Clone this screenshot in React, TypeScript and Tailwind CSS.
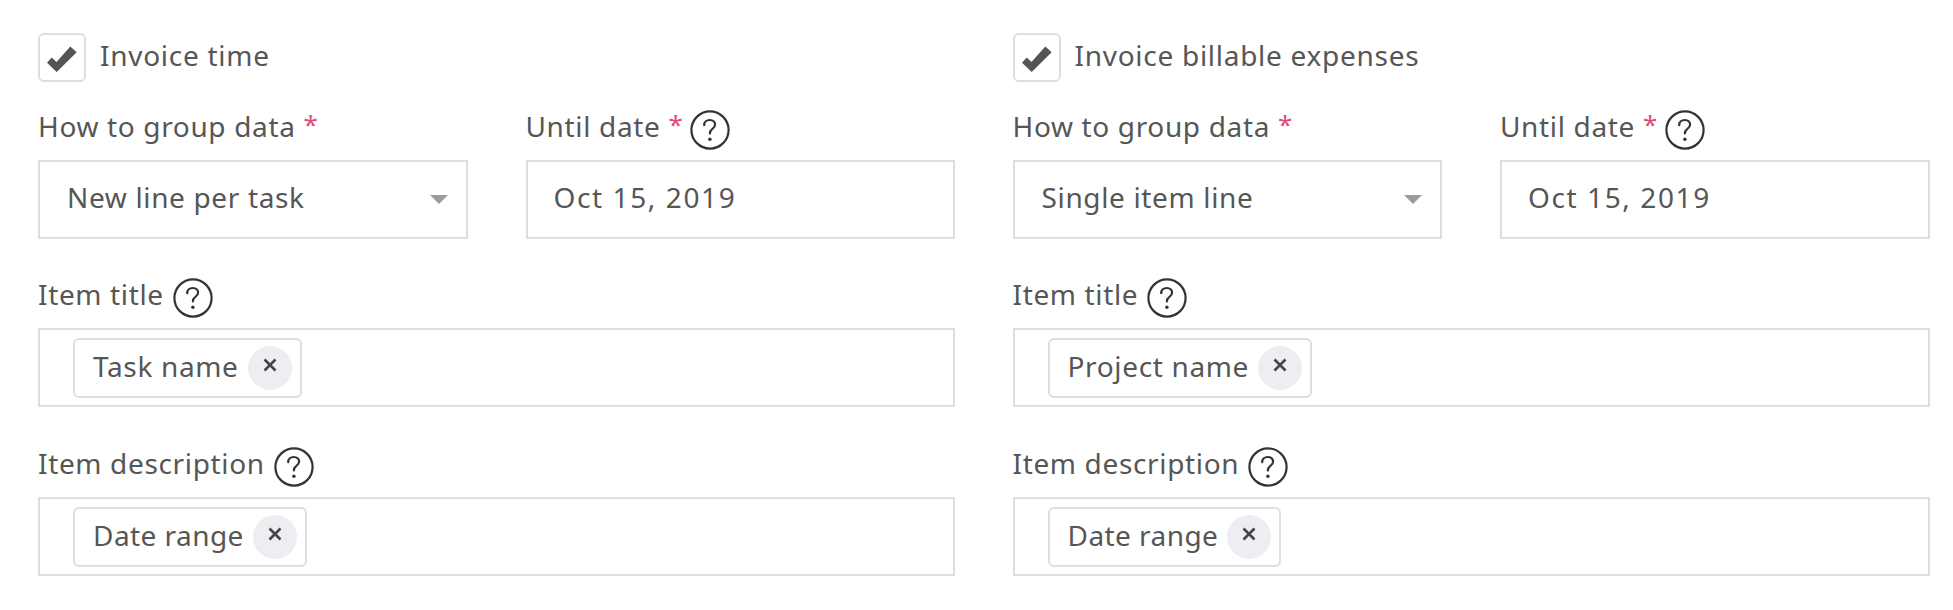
import React from "react";

const font = { fontFamily: '"Noto Sans", sans-serif' };

function Help({ after }: { after: boolean }) {
  return (
    <svg width="40" height="40" viewBox="0 0 40 40" className={after ? "shrink-0 ml-[7px] -mt-[1px]" : "shrink-0 ml-[9px] -mt-[1px]"} fill="none">
      <circle cx="20" cy="20" r="18.6" stroke="#333" strokeWidth="2.2" />
      <path d="M14.2 15.2c0-3.200 2.400-5.200 5.600-5.200 3.200 0 5.300 2 5.300 4.600 0 2.300-1.200 3.400-2.900 4.600-1.700 1.200-2.300 2.100-2.300 4.300" stroke="#333" strokeWidth="2.200" strokeLinecap="round" />
      <circle cx="19.900" cy="29.200" r="1.700" fill="#333" />
    </svg>
  );
}

function Check({ label }: { label: string }) {
  return (
    <div className="flex items-center h-[49px]">
      <div className="w-[48px] h-[49px] border-2 border-[#dedede] rounded-[6px] flex items-center justify-center">
        <svg width="32" height="28" viewBox="0 0 32 28">
          <path d="M1 18.800 L5.700 13.500 L10.500 18 L24.300 2.500 L30.700 8.200 L10.700 28 Z" fill="#555" />
        </svg>
      </div>
      <span className="ml-[14px] text-[28px] leading-[40px] tracking-[0.72px] text-[#565656] -mt-[6px]">{label}</span>
    </div>
  );
}

function Label({ text, req, help }: { text: string; req?: boolean; help?: boolean }) {
  return (
    <div className="flex items-center h-[40px] text-[28px] leading-[40px] tracking-[0.65px] text-[#565656]">
      <span className="-mt-[8px]">{text}</span>
      {req && <span className="ml-[8px] text-[26px] text-[#e0487a] -mt-[12px]">*</span>}
      {help && <Help after={!!req} />}
    </div>
  );
}

function Chip({ text, tight }: { text: string; tight?: boolean }) {
  return (
    <div className={`flex items-center h-[60px] border-2 border-[#dedede] rounded-[6px] pl-[18px] pr-[8px] text-[28px] leading-[40px] text-[#565656] ${tight ? "tracking-[0.45px]" : "tracking-[0.65px]"}`}>
      <span className="-mt-[4px]">{text}</span>
      <span className="ml-[9px] w-[44px] h-[44px] rounded-full bg-[#eeeef2] flex items-center justify-center">
        <svg width="14" height="14" viewBox="0 0 14 14" className="-mt-[5px]">
          <path d="M1.500 1.500 L12.500 12.500 M12.500 1.500 L1.500 12.500" stroke="#444" strokeWidth="2.600" />
        </svg>
      </span>
    </div>
  );
}

function Column({ check, group, title }: { check: string; group: string; title: string }) {
  return (
    <div className="w-[917px]">
      <Check label={check} />
      <div className="grid grid-cols-2 gap-x-[58px] mt-[28px]">
        <div>
          <Label text="How to group data" req />
          <div className="mt-[10px] h-[79px] border-2 border-[#dedede] flex items-center justify-between pl-[27px] pr-[18px] text-[28px] leading-[40px] tracking-[0.65px] text-[#565656]">
            <span className="-mt-[6px]">{group}</span>
            <span className="w-0 h-0 border-x-[9px] border-x-transparent border-t-[9px] border-t-[#9b9b9b]" />
          </div>
        </div>
        <div>
          <Label text="Until date" req help />
          <div className="mt-[10px] h-[79px] border-2 border-[#dedede] flex items-center pl-[26px] text-[28px] leading-[40px] tracking-[1.6px] text-[#565656]">
            <span className="-mt-[5px]">Oct 15, 2019</span>
          </div>
        </div>
      </div>
      <div className="mt-[39px]">
        <Label text="Item title" help />
      </div>
      <div className="mt-[10px] h-[79px] border-2 border-[#dedede] flex items-center pl-[33px]">
        <Chip text={title} />
      </div>
      <div className="mt-[40px]">
        <Label text="Item description" help />
      </div>
      <div className="mt-[10px] h-[79px] border-2 border-[#dedede] flex items-center pl-[33px]">
        <Chip text="Date range" tight />
      </div>
    </div>
  );
}

export default function App() {
  return (
    <div className="w-[1953px] h-[610px] bg-white overflow-hidden flex gap-x-[57.5px] pl-[38px] pt-[33px]" style={font}>
      <Column check="Invoice time" group="New line per task" title="Task name" />
      <Column check="Invoice billable expenses" group="Single item line" title="Project name" />
    </div>
  );
}
